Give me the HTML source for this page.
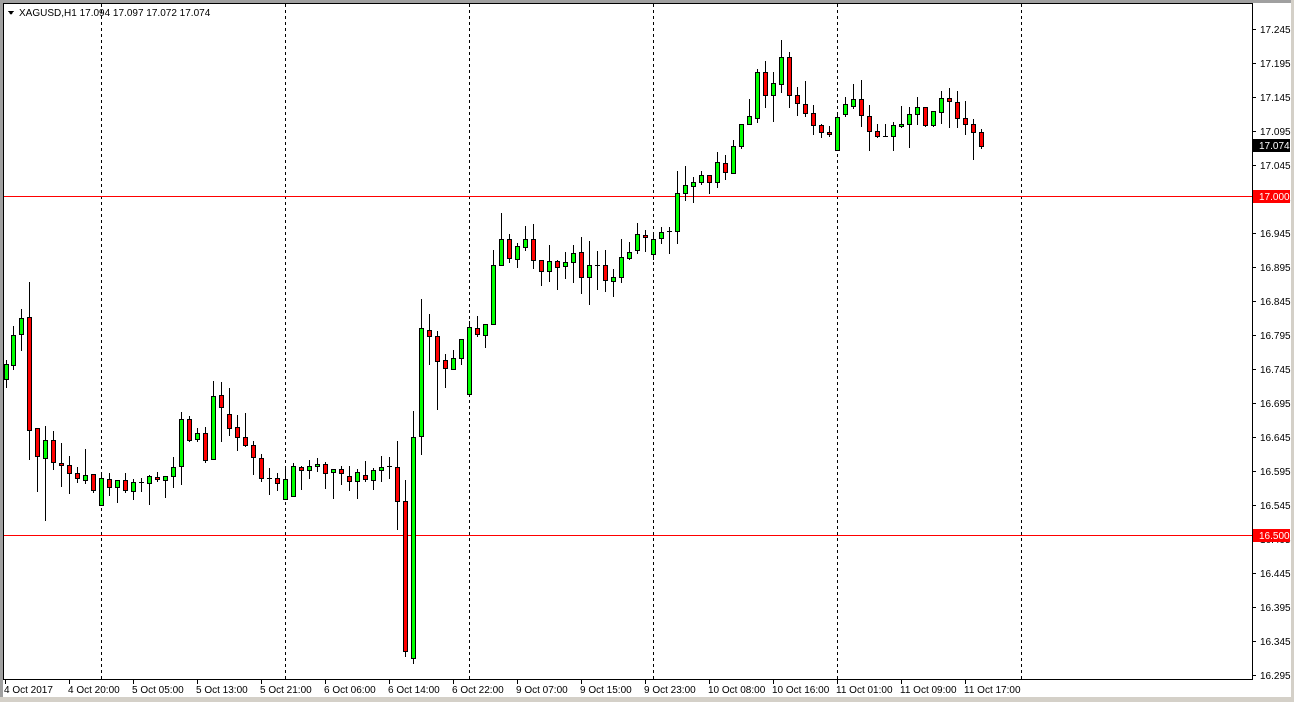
<!DOCTYPE html>
<html><head><meta charset="utf-8"><style>
html,body{margin:0;padding:0;background:#fff;}
body{width:1294px;height:702px;overflow:hidden;position:relative;font-family:"Liberation Sans",sans-serif;}
svg{position:absolute;left:0;top:0;}
text{font-family:"Liberation Sans",sans-serif;font-size:10px;fill:#000;}
</style></head><body>
<svg id="s" width="1294" height="702" xmlns="http://www.w3.org/2000/svg" shape-rendering="crispEdges">
<rect x="0" y="0" width="1294" height="702" fill="#fff"/>
<rect x="0" y="0" width="1294" height="3" fill="#a0a0a0"/>
<rect x="0" y="0" width="3" height="702" fill="#a0a0a0"/>
<rect x="1291" y="0" width="3" height="702" fill="#d4d0c8"/>
<rect x="0" y="697" width="1294" height="5" fill="#d4d0c8"/>
<rect x="3.5" y="3.5" width="1249" height="676" fill="none" stroke="#000"/>
<g stroke="#000" stroke-dasharray="3,3">
<line x1="101.5" y1="4" x2="101.5" y2="679"/><line x1="285.5" y1="4" x2="285.5" y2="679"/>
<line x1="469.5" y1="4" x2="469.5" y2="679"/><line x1="653.5" y1="4" x2="653.5" y2="679"/>
<line x1="837.5" y1="4" x2="837.5" y2="679"/><line x1="1021.5" y1="4" x2="1021.5" y2="679"/>
</g>
<rect x="4" y="196" width="1248" height="1" fill="#ff0000"/>
<rect x="4" y="535" width="1248" height="1" fill="#ff0000"/>
<g id="c"></g>
<g id="ax"></g>
<polygon points="8,11 14,11 11,15" fill="#000"/>
<text x="19" y="16">XAGUSD,H1  17.094 17.097 17.072 17.074</text>
<rect x="1253" y="190" width="37" height="13" fill="#ff0000"/>
<text x="1259" y="200" style="fill:#fff">17.000</text>
<rect x="1253" y="529" width="37" height="13" fill="#ff0000"/>
<text x="1259" y="539" style="fill:#fff">16.500</text>
<rect x="1253" y="139" width="37" height="13" fill="#000"/>
<text x="1259" y="149" style="fill:#fff">17.074</text>
</svg>
<script>
var d=[
[6,360,364,379,387,'g'],[13,326,335,365,369,'g'],[21,309,318,334,350,'g'],[29,282,317,430,459,'r'],
[37,428,428,456,491,'r'],[45,426,440,458,520,'g'],[53,431,440,462,469,'r'],[61,443,463,465,486,'r'],
[69,456,465,473,493,'r'],[77,467,473,478,482,'r'],[85,449,475,480,483,'g'],[93,474,474,490,492,'r'],
[101,472,478,505,505,'g'],[109,473,479,487,495,'r'],[117,480,480,487,502,'g'],[125,473,480,490,492,'r'],
[133,479,482,491,499,'g'],[141,478,482,482,491,'d'],[149,475,476,483,504,'g'],[157,472,477,479,481,'r'],
[165,476,476,480,497,'g'],[173,457,467,476,487,'g'],[181,412,419,466,484,'g'],[189,416,419,440,441,'r'],
[197,428,433,439,441,'g'],[205,427,433,460,462,'r'],[213,381,396,459,459,'g'],[221,382,395,407,441,'r'],
[229,388,414,428,435,'r'],[237,415,427,437,450,'r'],[245,413,437,445,446,'r'],[253,441,445,457,474,'r'],
[261,454,458,478,481,'r'],[269,468,478,478,494,'d'],[277,473,478,483,490,'r'],[285,466,479,499,499,'g'],
[293,463,466,496,496,'g'],[301,466,467,470,489,'r'],[309,460,466,470,478,'g'],[317,458,464,466,471,'g'],
[325,462,464,473,488,'r'],[333,469,469,472,498,'g'],[341,466,469,473,484,'r'],[349,466,476,481,490,'r'],
[357,469,472,481,498,'g'],[365,461,475,479,481,'r'],[373,468,470,480,489,'g'],[381,456,467,470,481,'g'],
[389,457,466,466,478,'d'],[397,441,467,501,529,'r'],[405,480,501,651,656,'r'],[413,411,437,658,663,'g'],
[421,299,328,436,454,'g'],[429,314,330,336,364,'r'],[437,331,336,361,409,'r'],[445,354,360,368,387,'r'],
[453,350,358,369,369,'g'],[461,339,339,358,364,'g'],[469,321,327,394,395,'g'],[477,316,328,334,336,'r'],
[485,324,324,335,347,'g'],[493,250,265,324,324,'g'],[501,213,239,265,265,'g'],[509,234,239,258,262,'r'],
[517,243,246,259,267,'g'],[525,226,239,247,250,'g'],[533,224,239,260,268,'r'],[541,260,260,271,285,'r'],
[549,245,261,271,281,'g'],[557,260,261,267,289,'r'],[565,252,262,266,278,'g'],[573,245,253,262,282,'g'],
[581,237,252,277,293,'r'],[589,241,265,277,304,'g'],[597,251,265,265,289,'d'],[605,250,265,280,291,'r'],
[613,269,277,281,296,'g'],[621,239,257,277,282,'g'],[629,242,252,258,259,'g'],[637,223,234,250,253,'g'],
[645,230,235,237,251,'r'],[653,232,239,254,259,'g'],[661,227,232,238,243,'g'],[669,227,231,231,253,'d'],
[677,171,193,231,243,'g'],[685,166,185,193,200,'g'],[693,177,182,186,202,'g'],[701,171,175,182,184,'g'],
[709,175,175,182,193,'r'],[717,152,162,182,187,'g'],[725,155,163,172,179,'r'],[733,140,146,173,173,'g'],
[741,124,124,146,148,'g'],[749,99,116,124,124,'g'],[757,69,72,118,122,'g'],[765,61,72,95,107,'r'],
[773,72,83,95,121,'g'],[781,40,57,84,92,'g'],[789,52,57,95,107,'r'],[797,87,95,103,115,'r'],
[805,81,104,113,116,'r'],[813,105,113,125,134,'r'],[821,124,125,132,137,'r'],[829,126,132,134,136,'r'],
[837,113,117,150,150,'g'],[845,97,104,114,116,'g'],[853,84,99,106,108,'g'],[861,80,99,115,126,'r'],
[869,105,116,131,150,'r'],[877,124,131,136,137,'r'],[885,124,136,136,136,'d'],[893,122,125,136,150,'g'],
[901,106,124,126,127,'g'],[909,107,114,124,147,'g'],[917,97,107,114,124,'g'],[925,107,107,125,126,'r'],
[933,111,111,125,126,'g'],[941,91,98,112,123,'g'],[949,88,98,101,127,'r'],[957,91,102,118,127,'r'],
[965,101,118,124,134,'r'],[973,119,124,132,159,'r'],[981,129,132,146,148,'r']];
var h='';
d.forEach(function(c){var x=c[0];
h+='<line x1="'+(x+0.5)+'" y1="'+c[1]+'" x2="'+(x+0.5)+'" y2="'+(c[4]+1)+'" stroke="#000"/>';
if(c[5]=='d'){h+='<line x1="'+(x-2)+'" y1="'+(c[2]+0.5)+'" x2="'+(x+3)+'" y2="'+(c[2]+0.5)+'" stroke="#000"/>';}
else{var hh=Math.max(c[3]-c[2],2);h+='<rect x="'+(x-1.5)+'" y="'+(c[2]+0.5)+'" width="4" height="'+hh+'" fill="'+(c[5]=='g'?'#00ff00':'#ff0000')+'" stroke="#000"/>';}
});
document.getElementById('c').innerHTML=h;
var a='';
for(var i=0;i<20;i++){var p=(17.245-i*0.05).toFixed(3),y=29+i*34;
a+='<line x1="1252" y1="'+(y+0.5)+'" x2="1256" y2="'+(y+0.5)+'" stroke="#000"/><text x="1260" y="'+(y+4)+'">'+p+'</text>';}
var L=['4 Oct 2017','4 Oct 20:00','5 Oct 05:00','5 Oct 13:00','5 Oct 21:00','6 Oct 06:00','6 Oct 14:00','6 Oct 22:00','9 Oct 07:00','9 Oct 15:00','9 Oct 23:00','10 Oct 08:00','10 Oct 16:00','11 Oct 01:00','11 Oct 09:00','11 Oct 17:00'];
L.forEach(function(t,i){var x=5+i*64;
a+='<line x1="'+(x+0.5)+'" y1="679" x2="'+(x+0.5)+'" y2="684" stroke="#000"/><text x="'+(x-1)+'" y="693">'+t+'</text>';});
document.getElementById('ax').innerHTML=a;
</script>
</body></html>
